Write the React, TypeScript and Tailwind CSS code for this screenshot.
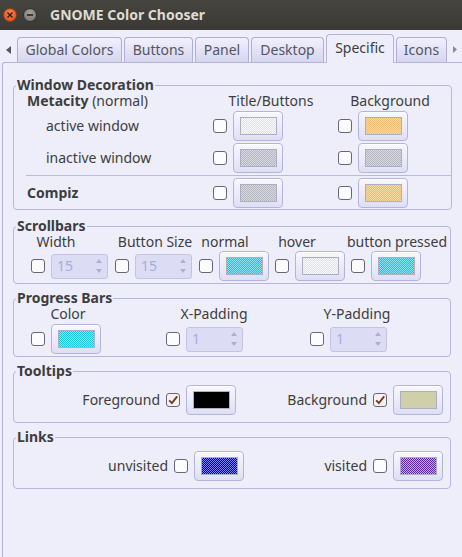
import React from "react";

const SW = {
  light: "[background-image:repeating-conic-gradient(#fbfbfe_0_25%,#e0e0ea_0_50%)]",
  gray: "[background-image:repeating-conic-gradient(#d8d8e0_0_25%,#b6b6c0_0_50%)]",
  orange: "[background-image:repeating-conic-gradient(#f9d9a0_0_25%,#ebbf74_0_50%)]",
  cyan: "[background-image:repeating-conic-gradient(#86e6f2_0_25%,#1cc2da_0_50%)]",
  black: "bg-black",
  khaki: "bg-[#cfd0a9]",
  blue: "[background-image:repeating-conic-gradient(#0000c4_0_25%,#8080f0_0_50%)]",
  purple: "[background-image:repeating-conic-gradient(#5e2aa0_0_25%,#c4a6ea_0_50%)]",
};

function Check({ on = false }: { on?: boolean }) {
  return (
    <div
      className={
        "w-[14px] h-[14px] shrink-0 rounded-[3px] border border-[#67677c] flex items-center justify-center " +
        (on ? "bg-[#f6f1ee]" : "bg-[#fcfcff]")
      }
    >
      {on && (
        <svg width="12" height="12" viewBox="0 0 12 12">
          <path d="M2.2 6.4 L4.9 9.1 L10.2 2.4" fill="none" stroke="#6e3b24" strokeWidth="1.9" />
        </svg>
      )}
    </div>
  );
}

function ColorBtn({ sw }: { sw: string }) {
  return (
    <div className="w-[50px] h-[30px] shrink-0 rounded-[4px] border border-[#b3b3dc] bg-gradient-to-b from-[#f7f7ff] to-[#dfdff4] flex items-center justify-center shadow-[inset_0_1px_0_#ffffff]">
      <div className={"w-[37px] h-[18px] border border-[#aeaec2] [background-size:2px_2px] " + sw} />
    </div>
  );
}

function Spin({ v }: { v: string }) {
  return (
    <div className="w-[57px] h-[25px] shrink-0 rounded-[3px] border border-[#c3c3e6] bg-[#dcdcf4] flex items-center">
      <span className="flex-1 pl-[5px] text-[#a5ade0] leading-none">{v}</span>
      <div className="w-[16px] h-full flex flex-col items-center justify-center gap-[6px]">
        <svg width="6" height="4" viewBox="0 0 6 4">
          <path d="M0 4 L3 0 L6 4 Z" fill="#b0b0cc" />
        </svg>
        <svg width="6" height="4" viewBox="0 0 6 4">
          <path d="M0 0 L3 4 L6 0 Z" fill="#b0b0cc" />
        </svg>
      </div>
    </div>
  );
}

function Frame({ title, children, cls }: { title: string; children: React.ReactNode; cls: string }) {
  return (
    <fieldset className={"w-[438px] rounded-[4px] border border-[#b6b6de] " + cls}>
      <legend className="ml-[2px] px-[1px] font-bold leading-[16px] text-[#3d3d3d]">{title}</legend>
      {children}
    </fieldset>
  );
}

function Head({ w, children }: { w: string; children: React.ReactNode }) {
  return <div className={"shrink-0 flex justify-center whitespace-nowrap " + w}>{children}</div>;
}

const tabs = [
  { t: "Global Colors", w: "w-[105px]" },
  { t: "Buttons", w: "w-[69px]" },
  { t: "Panel", w: "w-[54px]" },
  { t: "Desktop", w: "w-[73px]" },
  { t: "Specific", w: "w-[68px]", active: true },
  { t: "Icons", w: "w-[51px]" },
];

export default function App() {
  return (
    <div className="w-[462px] h-[557px] overflow-hidden bg-[#eeeefa] font-['Noto_Sans',sans-serif] text-[14px] leading-[16px] text-[#3d3d3d] flex flex-col">
      {/* title bar */}
      <div className="h-[30px] shrink-0 bg-gradient-to-b from-[#46453f] to-[#3a3935] flex items-center pl-[3px]">
        <div className="w-[14px] h-[14px] rounded-full bg-[radial-gradient(circle_at_50%_35%,#f68855,#dc4714)] border border-[#9a3a12] flex items-center justify-center">
          <svg width="6" height="6" viewBox="0 0 6 6">
            <path d="M0.5 0.5 L5.5 5.5 M5.5 0.5 L0.5 5.5" stroke="#3a1608" strokeWidth="1.4" />
          </svg>
        </div>
        <div className="ml-[6px] w-[14px] h-[14px] rounded-full bg-[radial-gradient(circle_at_50%_35%,#a3a29c,#6f6e69)] border border-[#33322e] flex items-center justify-center">
          <div className="w-[6px] h-[2px] bg-[#3a3935]" />
        </div>
        <span className="ml-[13px] font-bold text-[#dfdbd2] leading-none">GNOME Color Chooser</span>
      </div>

      {/* tab row */}
      <div className="h-[32px] shrink-0 flex items-end">
        <div className="w-[17px] h-[25px] flex items-center justify-center">
          <svg width="5" height="8" viewBox="0 0 5 8">
            <path d="M5 0 L0 4 L5 8 Z" fill="#55555f" />
          </svg>
        </div>
        <div className="flex items-end gap-[2px]">
          {tabs.map((tb) =>
            tb.active ? (
              <div
                key={tb.t}
                className={
                  "relative z-10 -mb-px h-[29px] rounded-t-[4px] border border-b-0 border-[#b3b3dc] bg-[#eeeefa] flex items-center justify-center pb-[2px] " +
                  tb.w
                }
              >
                {tb.t}
              </div>
            ) : (
              <div
                key={tb.t}
                className={
                  "h-[25px] rounded-t-[4px] border border-b-0 border-[#aeaed8] bg-gradient-to-b from-[#f1f1fc] to-[#d5d5ef] flex items-center justify-center text-[#555560] " +
                  tb.w
                }
              >
                {tb.t}
              </div>
            )
          )}
        </div>
        <div className="w-[15px] h-[25px] flex items-center justify-center">
          <svg width="4" height="7" viewBox="0 0 4 7">
            <path d="M0 0 L4 3.5 L0 7 Z" fill="#8a8a96" />
          </svg>
        </div>
      </div>

      {/* page */}
      <div className="flex-1 ml-[2px] border-l border-t border-[#b3b3dc] rounded-tl-[3px] bg-[#eeeefa] pt-[14px] pl-[10px]">
        {/* Window Decoration */}
        <Frame title="Window Decoration" cls="pb-[1px]">
          <div className="h-[15px] leading-[15px] flex items-center">
            <div className="w-[199px] shrink-0 pl-[13px] whitespace-nowrap">
              <span className="font-bold">Metacity</span> (normal)
            </div>
            <Head w="w-[116px]">Title/Buttons</Head>
            <Head w="w-[122px]">Background</Head>
          </div>
          {[
            { l: "active window", a: SW.light, b: SW.orange, mt: "mt-[3px]" },
            { l: "inactive window", a: SW.gray, b: SW.gray, mt: "mt-[2px]" },
          ].map((r) => (
            <div key={r.l} className={"h-[30px] flex items-center " + r.mt}>
              <div className="w-[199px] shrink-0 pl-[32px]">{r.l}</div>
              <Check />
              <div className="ml-[6px]">
                <ColorBtn sw={r.a} />
              </div>
              <div className="ml-[55px]">
                <Check />
              </div>
              <div className="ml-[6px]">
                <ColorBtn sw={r.b} />
              </div>
            </div>
          ))}
          <div className="mt-[2px] ml-[12px] h-px bg-[#babadf]" />
          <div className="mt-[2px] h-[30px] flex items-center">
            <div className="w-[199px] shrink-0 pl-[13px] font-bold">Compiz</div>
            <Check />
            <div className="ml-[6px]">
              <ColorBtn sw={SW.gray} />
            </div>
            <div className="ml-[55px]">
              <Check />
            </div>
            <div className="ml-[6px]">
              <ColorBtn sw={SW.orange} />
            </div>
          </div>
        </Frame>

        {/* Scrollbars */}
        <Frame title="Scrollbars" cls="mt-[8px] pb-[2px]">
          <div className="h-[15px] leading-[15px] flex items-center">
            <Head w="w-[84px]">Width</Head>
            <Head w="w-[114px]">Button Size</Head>
            <Head w="w-[26px]">normal</Head>
            <Head w="w-[118px]">hover</Head>
            <Head w="w-[82px]">button pressed</Head>
          </div>
          <div className="mt-[2px] h-[30px] flex items-center pl-[17px]">
            <Check />
            <div className="ml-[6px]">
              <Spin v="15" />
            </div>
            <div className="ml-[7px]">
              <Check />
            </div>
            <div className="ml-[6px]">
              <Spin v="15" />
            </div>
            <div className="ml-[7px]">
              <Check />
            </div>
            <div className="ml-[6px]">
              <ColorBtn sw={SW.cyan} />
            </div>
            <div className="ml-[6px]">
              <Check />
            </div>
            <div className="ml-[6px]">
              <ColorBtn sw={SW.light} />
            </div>
            <div className="ml-[6px]">
              <Check />
            </div>
            <div className="ml-[6px]">
              <ColorBtn sw={SW.cyan} />
            </div>
          </div>
        </Frame>

        {/* Progress Bars */}
        <Frame title="Progress Bars" cls="mt-[6px] pb-[2px]">
          <div className="h-[15px] leading-[15px] flex items-center">
            <Head w="w-[108px]">Color</Head>
            <Head w="w-[184px]">X-Padding</Head>
            <Head w="w-[102px]">Y-Padding</Head>
          </div>
          <div className="mt-[3px] h-[30px] flex items-center pl-[17px]">
            <Check />
            <div className="ml-[6px]">
              <ColorBtn sw={SW.cyan} />
            </div>
            <div className="ml-[65px]">
              <Check />
            </div>
            <div className="ml-[6px]">
              <Spin v="1" />
            </div>
            <div className="ml-[67px]">
              <Check />
            </div>
            <div className="ml-[6px]">
              <Spin v="1" />
            </div>
          </div>
        </Frame>

        {/* Tooltips */}
        <Frame title="Tooltips" cls="mt-[6px] pb-[7px]">
          <div className="mt-[6px] h-[30px] flex items-center">
            <div className="w-[222px] shrink-0 flex items-center justify-end gap-[6px]">
              <span>Foreground</span>
              <Check on />
              <ColorBtn sw={SW.black} />
            </div>
            <div className="flex-1 flex items-center justify-end gap-[6px] pr-[7px]">
              <span>Background</span>
              <Check on />
              <ColorBtn sw={SW.khaki} />
            </div>
          </div>
        </Frame>

        {/* Links */}
        <Frame title="Links" cls="mt-[6px] pb-[7px]">
          <div className="mt-[6px] h-[30px] flex items-center">
            <div className="w-[230px] shrink-0 flex items-center justify-end gap-[6px]">
              <span>unvisited</span>
              <Check />
              <ColorBtn sw={SW.blue} />
            </div>
            <div className="flex-1 flex items-center justify-end gap-[6px] pr-[7px]">
              <span>visited</span>
              <Check />
              <ColorBtn sw={SW.purple} />
            </div>
          </div>
        </Frame>
      </div>
    </div>
  );
}
